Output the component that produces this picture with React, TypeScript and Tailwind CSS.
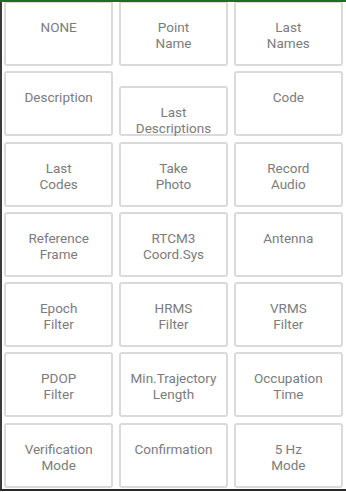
import React from 'react';

type Item = { label: string[]; short?: boolean };

const items: Item[] = [
  { label: ['NONE'] },
  { label: ['Point', 'Name'] },
  { label: ['Last', 'Names'] },
  { label: ['Description'] },
  { label: ['Last', 'Descriptions'], short: true },
  { label: ['Code'] },
  { label: ['Last', 'Codes'] },
  { label: ['Take', 'Photo'] },
  { label: ['Record', 'Audio'] },
  { label: ['Reference', 'Frame'] },
  { label: ['RTCM3', 'Coord.Sys'] },
  { label: ['Antenna'] },
  { label: ['Epoch', 'Filter'] },
  { label: ['HRMS', 'Filter'] },
  { label: ['VRMS', 'Filter'] },
  { label: ['PDOP', 'Filter'] },
  { label: ['Min.Trajectory', 'Length'] },
  { label: ['Occupation', 'Time'] },
  { label: ['Verification', 'Mode'] },
  { label: ['Confirmation'] },
  { label: ['5 Hz', 'Mode'] },
];

function OptionButton({ item }: { item: Item }) {
  return (
    <button
      className={`flex flex-col items-center rounded-[3px] border-2 border-[#dadada] bg-white pt-[16px] text-[13.5px] leading-[16px] text-[#7c7c7c] ${
        item.short ? 'h-[50px] self-end' : 'h-full'
      }`}
    >
      {item.label.map((line) => (
        <span key={line}>{line}</span>
      ))}
    </button>
  );
}

export default function App() {
  return (
    <div
      className="flex h-[492px] w-[346px] flex-col bg-white"
      style={{ fontFamily: 'Roboto, "Liberation Sans", sans-serif' }}
    >
      <div className="h-[2px] w-full bg-[#1f6e25]" />
      <div className="h-[487px] overflow-hidden border-l-[2px] border-[#3a3a3a]">
        <div className="-mt-[1px] ml-[2px] grid w-[339px] grid-cols-3 auto-rows-[65px] gap-x-[5.5px] gap-y-[5.3px]">
          {items.map((item) => (
            <OptionButton key={item.label.join(' ')} item={item} />
          ))}
        </div>
      </div>
      <div className="h-[2px] w-full bg-[#2a2a2a]" />
    </div>
  );
}
